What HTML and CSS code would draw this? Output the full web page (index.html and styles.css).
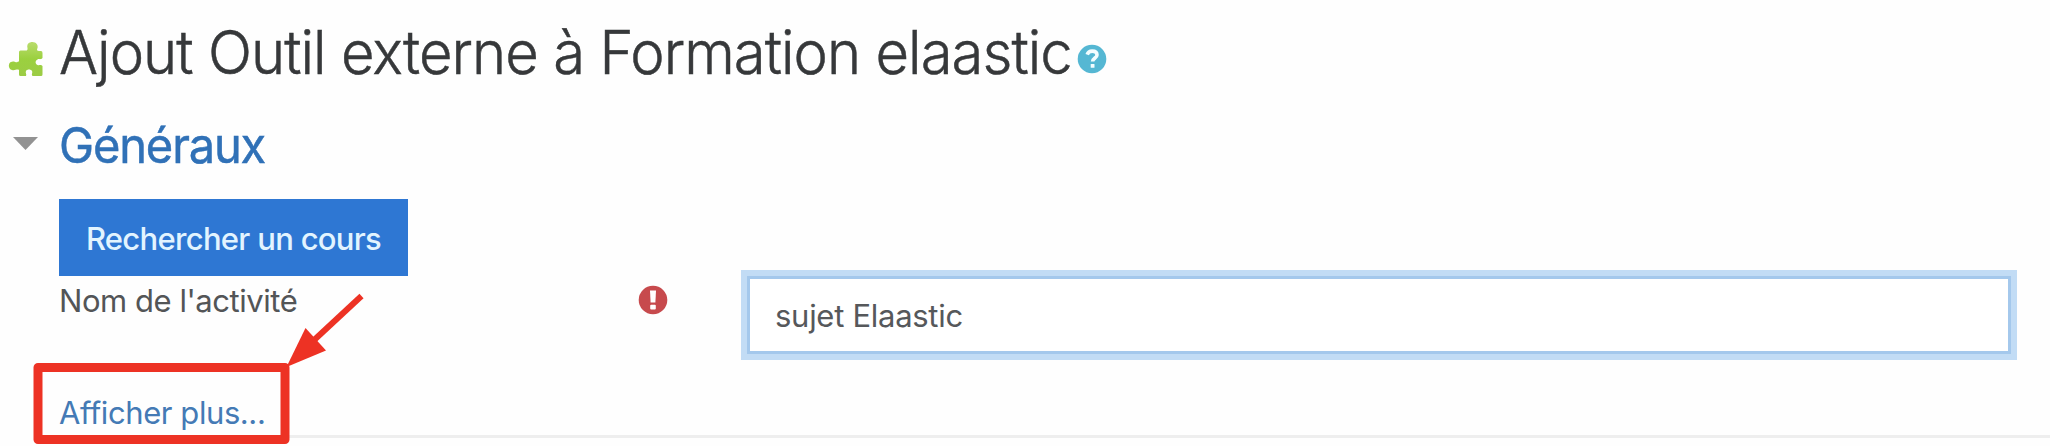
FILE: index.html
```
<!DOCTYPE html>
<html lang="fr">
<head>
<meta charset="utf-8">
<title>Ajout Outil externe</title>
<link rel="stylesheet" href="styles.css">
</head>
<body>
<main class="page">
  <header class="page-header">
    <svg class="puzzle" viewBox="0 0 36 36">
      <defs><linearGradient id="leaf" x1="0" y1="0" x2="0" y2="1"><stop offset="0" stop-color="#b9dc6c"/><stop offset=".5" stop-color="#9bd03f"/><stop offset="1" stop-color="#9ccc45"/></linearGradient></defs>
      <path fill="url(#leaf)" d="M11 11Q11 9.500 12.500 9.500H17Q20 10 19.500 7C18.500 3 21 1 24.500 1C28 1 30.500 4 29.500 7Q28 10 31 10H33Q34.500 10 34.500 12V17C33 19 31 17.500 29.500 18.500C27 20 27 22.500 29.500 24C31 25 33 23 34.500 25V33.500Q34.500 35 33 35H24.500C23 33 25 32 24 30C23 28 19 28 18 30C17 32 19 33 18 35H12.500Q11 35 11 33.500V29C9 27.500 7 30 4 29C0 28 0 22 3 21C6 19 9 23 11 20Z"/>
    </svg>
    <h1 class="title">Ajout Outil externe à Formation elaastic</h1>
    <svg class="help" viewBox="0 0 30 30">
      <circle cx="15" cy="15" r="14.300" fill="#55b7d3"/>
      <path d="M10.200 10.600C11 8 13 7.100 15.200 7.100C18 7.100 20 8.500 20 10.900C20 14 15.600 14 15.600 17.600" fill="none" stroke="#f3fdff" stroke-width="3.600"/>
      <rect x="13.700" y="20" width="3.800" height="3.800" rx=".6" fill="#f3fdff"/>
    </svg>
  </header>
  <section class="section">
    <div class="section-header">
      <svg class="caret" viewBox="0 0 25 13"><path d="M0 0H25L12.500 13Z" fill="#929292"/></svg>
      <h2 class="section-title">Généraux</h2>
    </div>
    <button class="search" type="button">Rechercher un cours</button>
    <div class="field">
      <label class="label">Nom de l'activité</label>
      <svg class="required" viewBox="0 0 30 30">
        <circle cx="15" cy="15" r="14.300" fill="#c74a4d"/>
        <path d="M12 5.500H18L17.400 17.500H12.600Z" fill="#fff"/>
        <rect x="12.200" y="19.800" width="5.600" height="4.700" rx="1" fill="#fff"/>
      </svg>
      <div class="input" role="textbox">sujet Elaastic</div>
    </div>
    <div class="more"><a class="more-link">Afficher plus...</a></div>
  </section>
  <svg class="annotation" viewBox="0 0 400 446">
    <rect x="38" y="367.500" width="247" height="72" fill="none" stroke="#ed3224" stroke-width="9" stroke-linejoin="round"/>
    <path d="M361.500 296L312 342" stroke="#ed3224" stroke-width="6"/>
    <path d="M286.500 367L305.500 328L326 350.500Z" fill="#ed3224"/>
  </svg>
</main>
</body>
</html>
```
FILE: styles.css
```
* { box-sizing: border-box; }
body { margin: 0; background: #fefefe; font-family: Inter, "Liberation Sans", sans-serif; }
.page { position: relative; height: 446px; overflow: hidden; }
.page-header { display: flex; align-items: flex-start; height: 104px; padding-left: 8px; }
.puzzle { width: 36px; height: 36px; margin-top: 41px; }
.title { margin: 0 0 0 15px; width: 1018px; font-size: 61px; font-weight: 300; line-height: 104px; letter-spacing: -1px; color: #36383a; -webkit-text-stroke: .5px #36383a; white-space: nowrap; transform: scaleX(.95); transform-origin: left; }
.help { width: 30px; height: 30px; margin-top: 44px; }
.section-header { display: flex; align-items: center; height: 82px; padding-left: 13px; }
.caret { width: 25px; height: 13px; margin-top: -3px; }
.section-title { margin: 2px 0 0 21px; font-size: 49px; font-weight: 400; line-height: 82px; letter-spacing: -1.2px; color: #3071b7; -webkit-text-stroke: .5px #3071b7; transform: scaleX(.96); transform-origin: left; }
.search { display: block; width: 349px; height: 77px; margin: 13px 0 0 59px; padding: 0; border: 0; background: #2e77d3; color: #e2f4ff; font-family: inherit; font-size: 31px; font-weight: 500; line-height: 79px; letter-spacing: -0.7px; white-space: nowrap; }
.field { display: grid; grid-template-columns: 579px 109px 1264px; height: 78px; padding-left: 59px; }
.label { font-size: 31px; line-height: 49px; letter-spacing: -0.45px; color: #535557; white-space: nowrap; }
.required { width: 30px; height: 30px; margin-top: 9px; }
.input { height: 78px; border: 3px solid #a4c8ec; box-shadow: 0 0 0 6px #c2dcf5; padding-left: 25px; background: #fff; color: #56585b; font-size: 31px; line-height: 74px; letter-spacing: -0.28px; white-space: nowrap; }
.more { height: 84px; margin-left: 59px; padding-top: 39px; border-bottom: 3px solid #eeeeee; font-size: 31px; line-height: 40px; letter-spacing: -0.42px; color: #447ab5; }
.annotation { position: absolute; left: 0; top: 0; width: 400px; height: 446px; }
```
